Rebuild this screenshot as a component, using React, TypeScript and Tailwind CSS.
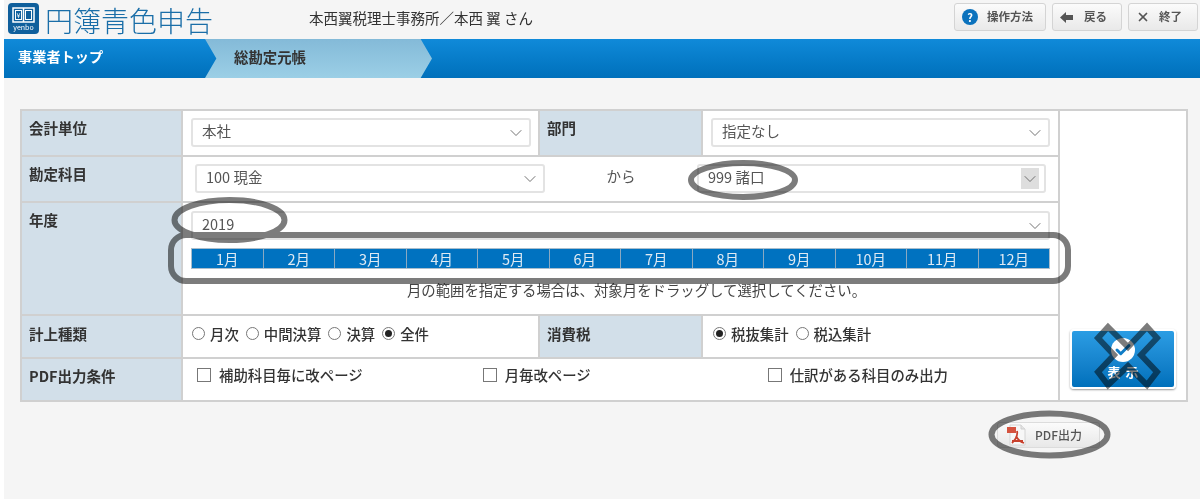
import { ChevronDown, X, Check } from 'lucide-react'

const months = ['1月', '2月', '3月', '4月', '5月', '6月', '7月', '8月', '9月', '10月', '11月', '12月']

const SelectBox = ({ value, className = '', shaded = false }: { value: string; className?: string; shaded?: boolean }) => (
  <div className={`h-[29px] flex items-center justify-between bg-white border-2 border-[#e3e3e3] rounded-[3px] pl-[9px] pb-[3px] text-[14.500px] text-[#555] ${shaded ? 'pr-[5px]' : 'pr-[4px]'} ${className}`}>
    <span>{value}</span>
    <span className={`w-[18px] h-[21px] mt-[3px] flex items-center justify-center ${shaded ? 'bg-[#dedede]' : ''}`}>
      <ChevronDown className="w-[20px] h-[20px] shrink-0 text-[#666]" strokeWidth={1.1} />
    </span>
  </div>
)

const Radio = ({ label, checked = false }: { label: string; checked?: boolean }) => (
  <label className="flex items-center gap-[5px] text-[14.400px] font-medium text-[#333]">
    <span className="w-[13px] h-[13px] rounded-full border border-[#777] flex items-center justify-center">
      {checked && <span className="w-[7px] h-[7px] rounded-full bg-[#222]" />}
    </span>
    {label}
  </label>
)

const Checkbox = ({ label }: { label: string }) => (
  <label className="flex items-center gap-[8px] text-[14.400px] font-medium text-[#333]">
    <span className="w-[14px] h-[14px] border border-[#777] bg-white" />
    {label}
  </label>
)

const Label = ({ children, className = '' }: { children: React.ReactNode; className?: string }) => (
  <div className={`bg-[#d2dfe9] pl-[7px] text-[14.500px] font-bold text-[#333] ${className}`}>{children}</div>
)

const TopButton = ({ icon, label, className = '' }: { icon: React.ReactNode; label: string; className?: string }) => (
  <button className={`h-[28px] flex items-center rounded-[3px] border border-[#d4d4d4] bg-gradient-to-b from-[#fbfbfb] to-[#e9e9e9] text-[11.500px] font-bold text-[#555] ${className}`}>
    {icon}
    {label}
  </button>
)

const Logo = () => (
  <div className="flex items-center gap-[6px] pt-[1px]">
    <div className="w-[31px] h-[31px] -mt-[4px] rounded-[4px] bg-[#0f5f9c] flex flex-col items-center pt-[4px]">
      <svg width="23" height="16" viewBox="0 0 23 16" fill="none" stroke="#fff" strokeWidth="1.500">
        <rect x="1" y="1" width="21" height="14" />
        <path d="M11.500 1v14" />
        <rect x="3.500" y="3.500" width="6" height="9" strokeWidth="1" />
        <rect x="13.500" y="3.500" width="6" height="9" strokeWidth="1" />
        <text x="6.500" y="10.500" fontSize="7" fill="#fff" stroke="none" textAnchor="middle">¥</text>
      </svg>
      <span className="text-[7px] leading-[9px] text-white">yenbo</span>
    </div>
    <span className="text-[28px] text-[#1a6ea8] font-light">円簿青色申告</span>
  </div>
)

const BackArrow = () => (
  <svg width="13" height="11" viewBox="0 0 13 11" fill="#555">
    <path d="M0 5.500L6 0v3h7v5H6v3z" />
  </svg>
)

const PdfIcon = () => (
  <svg width="20" height="22" viewBox="0 0 20 22" fill="none">
    <path d="M3 1h11l4 4v16H3z" fill="#f7f7f7" stroke="#d4d4d4" />
    <path d="M14 1v4h4" fill="#e4e4e4" stroke="#cfcfcf" />
    <rect x="0" y="3" width="9" height="6" fill="#d5533f" />
    <path d="M10 7c1 4-2 9-5 12M9 12c2 4 4 6 8 7M5 17h11" stroke="#c8402c" strokeWidth="1.800" />
  </svg>
)

// Hand-drawn marks that were put on top of the screenshot
const Annotations = () => (
  <svg className="absolute inset-0 pointer-events-none mix-blend-multiply" width="1200" height="499" fill="none">
    <g stroke="#7c7c7c" strokeWidth="6">
      <ellipse cx="229.500" cy="220" rx="55" ry="20" />
      <ellipse cx="743" cy="180" rx="52" ry="17" />
      <ellipse cx="1049.500" cy="434.500" rx="58" ry="21" />
      <rect x="171" y="235" width="897" height="46" rx="15" />
      <path d="M1108 327L1128 347L1147 327L1157 338L1141 355L1157 372L1147 385L1128 366L1108 385L1098 372L1114 355L1098 338Z" />
    </g>
  </svg>
)

export default function App() {
  return (
    <div className="relative w-[1200px] h-[499px] overflow-hidden bg-white pl-[4px] font-['Noto_Sans_CJK_JP','Noto_Sans',sans-serif]">
      <div className="h-full bg-[#f5f5f5]">
        <header className="h-[39px] flex items-center pl-[4px] pr-[2px]">
          <Logo />
          <span className="ml-[96px] -mt-[3px] text-[14.500px] text-[#333]">本西翼税理士事務所／本西 翼 さん</span>
          <div className="ml-auto flex gap-[6px] -mt-[5px]">
            <TopButton
              className="w-[92px] pl-[7px] gap-[9px]"
              label="操作方法"
              icon={<span className="w-[16px] h-[16px] rounded-full bg-[#0b72bd] text-white text-[11px] leading-[16px] text-center">?</span>}
            />
            <TopButton className="w-[70px] pl-[7px] gap-[11px]" label="戻る" icon={<BackArrow />} />
            <TopButton className="w-[70px] pl-[7px] gap-[9px]" label="終了" icon={<X className="w-[14px] h-[14px] text-[#555]" strokeWidth={3} />} />
          </div>
        </header>

        <nav className="h-[39px] flex bg-gradient-to-b from-[#108ad9] to-[#0070bb]">
          <div className="w-[201px] flex items-center pl-[14px] pb-[3px] text-[14.200px] font-bold text-white">事業者トップ</div>
          <div className="w-[227px] flex items-center pl-[29px] pb-[3px] text-[14.400px] font-bold text-[#333] bg-gradient-to-b from-[#84bad8] to-[#9bcfe6] [clip-path:polygon(0_0,95%_0,100%_50%,95%_100%,0_100%,5%_50%)]">
            総勘定元帳
          </div>
        </nav>

        <main className="pl-[16px] pt-[31px]">
          <div className="w-[1168px] grid grid-cols-[159px_355px_161px_355px_126px] grid-rows-[44px_44px_111px_41px_41px] gap-[2px] p-[2px] bg-[#d0d0d0]">
            <Label className="pt-[6px]">会計単位</Label>
            <div className="bg-white pl-[8px] pr-[7px] pt-[7px]">
              <SelectBox value="本社" />
            </div>
            <Label className="pt-[6px]">部門</Label>
            <div className="bg-white pl-[8px] pr-[8px] pt-[7px]">
              <SelectBox value="指定なし" />
            </div>
            <div className="row-span-5 bg-white flex items-end justify-center pb-[11px]">
              <button className="w-[106px] h-[60px] rounded-[4px] border-2 border-white shadow-[0_1px_2px_#999] bg-gradient-to-b from-[#2b9de4] to-[#0070bb] flex flex-col items-center justify-center gap-[2px]">
                <span className="w-[24px] h-[24px] rounded-full bg-white flex items-center justify-center">
                  <Check className="w-[18px] h-[18px] text-[#0f7cc6]" strokeWidth={4} />
                </span>
                <span className="text-[13px] leading-[16px] tracking-[5px] pl-[5px] font-bold text-white">表示</span>
              </button>
            </div>

            <Label className="pt-[6px]">勘定科目</Label>
            <div className="col-span-3 bg-white flex pl-[12px] pt-[7px]">
              <SelectBox value="100 現金" className="w-[350px]" />
              <span className="w-[152px] text-center text-[14.500px] leading-[24px] text-[#555]">から</span>
              <SelectBox value="999 諸口" className="w-[349px]" shaded />
            </div>

            <Label className="pt-[6px]">年度</Label>
            <div className="col-span-3 bg-white px-[8px] pt-[8px]">
              <SelectBox value="2019" />
              <div className="mt-[8px] h-[21px] flex bg-[#0072c0] border border-[#a9bdcc]">
                {months.map((m) => (
                  <div key={m} className="flex-1 flex items-center justify-center border-r border-[#8aa9c2] last:border-r-0 text-[14.500px] text-[#dfeaf3]">
                    {m}
                  </div>
                ))}
              </div>
              <p className="mt-[11px] pl-[32px] text-center text-[14.400px] leading-[20px] text-[#444]">
                月の範囲を指定する場合は、対象月をドラッグして選択してください。
              </p>
            </div>

            <Label className="flex items-center pb-[6px]">計上種類</Label>
            <div className="bg-white flex items-center gap-[7px] pl-[9px] pb-[6px]">
              <Radio label="月次" />
              <Radio label="中間決算" />
              <Radio label="決算" />
              <Radio label="全件" checked />
            </div>
            <Label className="flex items-center pb-[6px]">消費税</Label>
            <div className="bg-white flex items-center gap-[7px] pl-[10px] pb-[6px]">
              <Radio label="税抜集計" checked />
              <Radio label="税込集計" />
            </div>

            <Label className="flex items-center pb-[8px]">PDF出力条件</Label>
            <div className="col-span-3 bg-white flex items-center pl-[14px] pb-[9px]">
              <Checkbox label="補助科目毎に改ページ" />
              <div className="ml-[120px]">
                <Checkbox label="月毎改ページ" />
              </div>
              <div className="ml-[177px]">
                <Checkbox label="仕訳がある科目のみ出力" />
              </div>
            </div>
          </div>

          <div className="mt-[20px] mr-[100px] flex justify-end">
            <button className="w-[103px] h-[26px] flex items-center gap-[8px] pl-[9px] rounded-[3px] border border-[#dcdcdc] bg-gradient-to-b from-[#fbfbfb] to-[#e8e8e8] text-[12px] font-medium text-[#555]">
              <PdfIcon />
              PDF出力
            </button>
          </div>
        </main>
      </div>
      <Annotations />
    </div>
  )
}
